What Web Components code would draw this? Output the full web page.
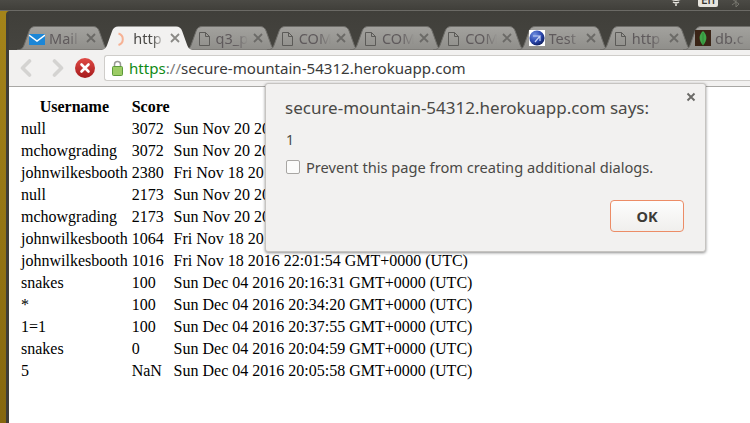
<!DOCTYPE html>
<html>
<head>
<meta charset="utf-8">
<title>secure-mountain-54312.herokuapp.com</title>
<style>
  html, body { margin: 0; width: 750px; height: 423px; overflow: hidden; background: #fff; }
</style>
</head>
<body>
<desk-top>
  <top-panel slot="panel"></top-panel>
  <browser-window>
    <tab-strip slot="tabs">
      <browser-tab icon="mail">Mail</browser-tab>
      <browser-tab icon="spinner" active>http</browser-tab>
      <browser-tab icon="doc">q3_p</browser-tab>
      <browser-tab icon="doc">COMP</browser-tab>
      <browser-tab icon="doc">COMP</browser-tab>
      <browser-tab icon="doc">COMP</browser-tab>
      <browser-tab icon="globe">Test</browser-tab>
      <browser-tab icon="doc">http</browser-tab>
      <browser-tab icon="leaf">db.c</browser-tab>
    </tab-strip>
    <tool-bar slot="toolbar"></tool-bar>
    <score-table></score-table>
    <alert-dialog slot="dialog" origin="secure-mountain-54312.herokuapp.com" message="1"></alert-dialog>
  </browser-window>
</desk-top>

<script>
const UI_FONT = '"Noto Sans", "Open Sans", sans-serif';

class DeskTop extends HTMLElement {
  constructor() {
    super();
    this.attachShadow({mode: 'open'}).innerHTML = `
      <style>
        :host { display: flex; flex-direction: column; width: 750px; height: 423px; overflow: hidden;
                background: linear-gradient(#a5851a, #85670f); }
        .rest { flex: 1; display: flex; min-height: 0; padding-left: 6px; }
      </style>
      <slot name="panel"></slot>
      <div class="rest"><slot></slot></div>`;
  }
}

class TopPanel extends HTMLElement {
  constructor() {
    super();
    this.attachShadow({mode: 'open'}).innerHTML = `
      <style>
        :host { display: flex; height: 10px; background: linear-gradient(#4b4a45, #403f3a);
                border-bottom: 1px solid #6b6a65; overflow: hidden; justify-content: flex-end; }
        svg { display: block; }
        .wifi { margin-right: 14px; }
        .lang { width: 20px; height: 7px; margin-right: 13px; background: #e6e4de; border-radius: 0 0 2px 2px;
                overflow: hidden; text-align: center; font: 500 12px/12px ${UI_FONT}; color: #33322e; }
        .lang span { display: block; margin-top: -6px; }
        .bt { margin-right: 9px; }
      </style>
      <svg class="wifi" width="16" height="6" viewBox="0 0 16 6" fill="none" stroke="#e6e4de" stroke-width="1.6">
        <path d="M2 -2 C5 1 11 1 14 -2"/><path d="M5 2 C6.5 3.2 9.5 3.2 11 2"/><circle cx="8" cy="5" r="1" fill="#e6e4de" stroke="none"/>
      </svg>
      <div class="lang"><span>En</span></div>
      <svg class="bt" width="10" height="7" viewBox="0 0 10 7" fill="none" stroke="#77766f" stroke-width="1">
        <path d="M1 -1 L8 4 L5 7 L5 -3 M1 5 L5 2"/>
      </svg>`;
  }
}

class BrowserWindow extends HTMLElement {
  constructor() {
    super();
    this.attachShadow({mode: 'open'}).innerHTML = `
      <style>
        :host { display: flex; flex-direction: column; flex: 1; min-width: 0; background: #3e3d38;
                border-radius: 4px 0 0 0; padding-left: 3px; }
        .page { flex: 1; position: relative; background: #fff; min-height: 0; }
      </style>
      <slot name="tabs"></slot>
      <slot name="toolbar"></slot>
      <div class="page"><slot></slot><slot name="dialog"></slot></div>`;
  }
}

class TabStrip extends HTMLElement {
  constructor() {
    super();
    this.attachShadow({mode: 'open'}).innerHTML = `
      <style>
        :host { display: flex; height: 24px; padding: 15px 0 0 8px; overflow: hidden;
                background: linear-gradient(#403f3a, #45443f); }
      </style>
      <slot></slot>`;
  }
}

const TAB_ICONS = {
  mail: `<svg width="16" height="16" viewBox="0 0 16 16"><rect y="4" width="16" height="11" fill="#1c86d6"/><path d="M0 5 L8 11 L16 5" fill="none" stroke="#fff" stroke-width="1.4"/></svg>`,
  spinner: `<svg width="16" height="16" viewBox="0 0 16 16"><path d="M6.5 3.5 A6 6 0 0 1 6.5 15" fill="none" stroke="#f6b194" stroke-width="2"/></svg>`,
  doc: `<svg width="16" height="16" viewBox="0 0 16 16" fill="none" stroke="#5c5b58"><path d="M3.5 2.5 H9.5 L13.5 6.5 V15.5 H3.5 Z M9.5 2.5 V6.5 H13.5"/></svg>`,
  globe: `<svg width="16" height="16" viewBox="0 0 16 16"><defs><radialGradient id="g" cx="35%" cy="30%" r="75%"><stop offset="0" stop-color="#6f8fe0"/><stop offset="0.6" stop-color="#2a46ad"/><stop offset="1" stop-color="#101f5c"/></radialGradient></defs><rect width="16" height="16" fill="#fff"/><circle cx="8" cy="8" r="7.6" fill="url(#g)"/><path d="M4 6 H11 L6 12 M11 6 V11" fill="none" stroke="#c7d3f4" stroke-width="1.2"/></svg>`,
  leaf: `<svg width="16" height="16" viewBox="0 0 16 16"><rect width="16" height="16" fill="#3a2416"/><path d="M8 1 C12.5 5 12.5 10 8 15.5 C3.5 10 3.5 5 8 1 Z" fill="#3fa648"/><path d="M8 3 V15" stroke="#2d7f36" stroke-width="0.7"/></svg>`
};

class BrowserTab extends HTMLElement {
  constructor() {
    super();
    const active = this.hasAttribute('active');
    const fill = active ? '#f2f1f0' : 'url(#t)';
    const icon = TAB_ICONS[this.getAttribute('icon')] || '';
    this.attachShadow({mode: 'open'}).innerHTML = `
      <style>
        :host { display: block; flex: none; position: relative; width: 94.25px; height: 24px; margin-right: -11px;
                z-index: ${active ? 2 : 1}; font: 14.5px/24px ${UI_FONT}; color: ${active ? '#4a4946' : '#5f5a5c'}; }
        .shape { position: absolute; left: 0; top: 0; }
        .row { position: relative; display: flex; align-items: center; height: 24px; padding-left: 12px; }
        .icon { flex: none; width: 16px; height: 16px; margin-right: ${active ? 5 : 4}px; }
        .icon svg { display: block; }
        .label { flex: none; width: 32px; overflow: hidden; white-space: nowrap;
                 -webkit-mask-image: linear-gradient(90deg, #000 60%, transparent);
                 mask-image: linear-gradient(90deg, #000 60%, transparent); }
        .close { flex: none; margin-left: 4px; width: 12px; height: 12px; }
      </style>
      <svg class="shape" width="94.25" height="24" viewBox="0 0 94 24">
        <defs><linearGradient id="t" x1="0" y1="0" x2="0" y2="1"><stop offset="0" stop-color="#a3a29e"/><stop offset="1" stop-color="#8f8e8a"/></linearGradient></defs>
        <path d="M0 24 C4 24 6 22 7 19 L12 5 C13 2 15 0.5 18 0.5 L76 0.5 C79 0.5 81 2 82 5 L87 19 C88 22 90 24 94 24 Z" fill="${fill}" stroke="${active ? 'none' : '#6e6d69'}" stroke-width="1"/>
      </svg>
      <div class="row">
        <span class="icon">${icon}</span>
        <span class="label"><slot></slot></span>
        <svg class="close" viewBox="0 0 12 12" fill="none" stroke="${active ? '#8a8986' : '#6b6a67'}" stroke-width="1.8"><path d="M2 2 L10 10 M10 2 L2 10"/></svg>
      </div>`;
  }
}

class ToolBar extends HTMLElement {
  constructor() {
    super();
    this.attachShadow({mode: 'open'}).innerHTML = `
      <style>
        :host { display: flex; align-items: flex-start; height: 37px; padding: 5px 0 0 11px; box-sizing: border-box;
                background: #f2f1f0; border-bottom: 1px solid #a9a8a5; }
        svg { display: block; flex: none; }
        .back { margin-top: 4px; }
        .fwd { margin: 4px 0 0 20px; }
        .stop { margin: 3px 0 0 11px; }
        .omni { flex: 1; display: flex; align-items: center; height: 26px; margin-left: 9px; box-sizing: border-box;
                background: #fff; border: 1px solid #cfcdca; border-right: 0; border-radius: 3px 0 0 3px;
                font: 15.1px/24px ${UI_FONT}; color: #3a3a3a; white-space: nowrap; }
        .lock { margin: 0 6px 0 7px; }
        .scheme { color: #0f8a16; }
        .sep { color: #7b7b7b; }
      </style>
      <svg class="back" width="12" height="18" viewBox="0 0 12 18" fill="none" stroke="#d4d3d1" stroke-width="3.6" stroke-linecap="round" stroke-linejoin="round"><path d="M9.5 2 L2.5 9 L9.5 16"/></svg>
      <svg class="fwd" width="12" height="18" viewBox="0 0 12 18" fill="none" stroke="#d4d3d1" stroke-width="3.6" stroke-linecap="round" stroke-linejoin="round"><path d="M2.5 2 L9.5 9 L2.5 16"/></svg>
      <svg class="stop" width="20" height="20" viewBox="0 0 20 20">
        <defs><linearGradient id="r" x1="0" y1="0" x2="0" y2="1"><stop offset="0" stop-color="#e04a45"/><stop offset="1" stop-color="#a51a1c"/></linearGradient></defs>
        <circle cx="10" cy="10" r="10" fill="url(#r)"/>
        <path d="M6.5 6.5 L13.5 13.5 M13.5 6.5 L6.5 13.5" stroke="#fff" stroke-width="2.6" stroke-linecap="round"/>
      </svg>
      <div class="omni">
        <svg class="lock" width="11" height="16" viewBox="0 0 11 16">
          <path d="M2.5 7 V4.5 A3 3 0 0 1 8.5 4.5 V7" fill="none" stroke="#9a9a96" stroke-width="1.5"/>
          <rect x="0.5" y="6.5" width="10" height="9" rx="1" fill="#9ccc65" stroke="#5d9a3a"/>
        </svg>
        <span class="url"><span class="scheme">https</span><span class="sep">://</span>secure-mountain-54312.herokuapp.com</span>
      </div>`;
  }
}

const SCORES = [
  ['null', '3072', 'Sun Nov 20 2016'],
  ['mchowgrading', '3072', 'Sun Nov 20 2016'],
  ['johnwilkesbooth', '2380', 'Fri Nov 18 2016'],
  ['null', '2173', 'Sun Nov 20 2016'],
  ['mchowgrading', '2173', 'Sun Nov 20 2016'],
  ['johnwilkesbooth', '1064', 'Fri Nov 18 2016'],
  ['johnwilkesbooth', '1016', 'Fri Nov 18 2016 22:01:54 GMT+0000 (UTC)'],
  ['snakes', '100', 'Sun Dec 04 2016 20:16:31 GMT+0000 (UTC)'],
  ['*', '100', 'Sun Dec 04 2016 20:34:20 GMT+0000 (UTC)'],
  ['1=1', '100', 'Sun Dec 04 2016 20:37:55 GMT+0000 (UTC)'],
  ['snakes', '0', 'Sun Dec 04 2016 20:04:59 GMT+0000 (UTC)'],
  ['5', 'NaN', 'Sun Dec 04 2016 20:05:58 GMT+0000 (UTC)']
];

class ScoreTable extends HTMLElement {
  constructor() {
    super();
    const rows = SCORES.map(r => `<tr>${r.map(c => `<td>${c}</td>`).join('')}</tr>`).join('');
    this.attachShadow({mode: 'open'}).innerHTML = `
      <style>
        :host { display: block; padding: 8px 8px 8px 9px; font: 16px "Liberation Serif", serif; color: #000; }
        td, th { white-space: nowrap; }
      </style>
      <table>
        <thead><tr><th>Username</th><th>Score</th><th></th></tr></thead>
        <tbody>${rows}</tbody>
      </table>`;
  }
}

class AlertDialog extends HTMLElement {
  constructor() {
    super();
    this.attachShadow({mode: 'open'}).innerHTML = `
      <style>
        :host { display: flex; flex-direction: column; position: absolute; left: 256px; top: -4px; width: 441px; height: 169px;
                box-sizing: border-box; padding: 12px 21px 0 19px; background: #f2f1f0; border: 1px solid #c6c4c1; border-radius: 3px;
                box-shadow: 0 1px 3px rgba(0,0,0,.45); font-family: ${UI_FONT}; color: #4a4946; }
        .close { position: absolute; right: 9px; top: 8px; }
        .title { font-size: 17px; line-height: 24px; white-space: nowrap; }
        .msg { margin-top: 10px; padding-left: 1px; font-size: 14px; line-height: 20px; }
        label { display: flex; align-items: center; margin-top: 7px; padding-left: 1px; font-size: 14.65px; line-height: 20px; white-space: nowrap; }
        .box { width: 12px; height: 12px; margin: 0 6px 0 0; background: #fbfbfa; border: 1px solid #a8a6a3; border-radius: 2px; flex: none; }
        .foot { display: flex; justify-content: flex-end; margin-top: 23px; }
        button { width: 74px; height: 32px; padding: 0; background: linear-gradient(#fdfdfd, #f0efed); border: 1.5px solid #ec8c66;
                 border-radius: 4px; font: 700 14.5px ${UI_FONT}; color: #3c3b38; }
      </style>
      <svg class="close" width="10" height="10" viewBox="0 0 10 10" fill="none" stroke="#6b6a67" stroke-width="1.9"><path d="M1.5 1.5 L8.5 8.5 M8.5 1.5 L1.5 8.5"/></svg>
      <div class="title">${this.getAttribute('origin')} says:</div>
      <div class="msg">${this.getAttribute('message')}</div>
      <label><span class="box"></span>Prevent this page from creating additional dialogs.</label>
      <div class="foot"><button>OK</button></div>`;
  }
}

customElements.define('desk-top', DeskTop);
customElements.define('top-panel', TopPanel);
customElements.define('browser-window', BrowserWindow);
customElements.define('tab-strip', TabStrip);
customElements.define('browser-tab', BrowserTab);
customElements.define('tool-bar', ToolBar);
customElements.define('score-table', ScoreTable);
customElements.define('alert-dialog', AlertDialog);
</script>
</body>
</html>
